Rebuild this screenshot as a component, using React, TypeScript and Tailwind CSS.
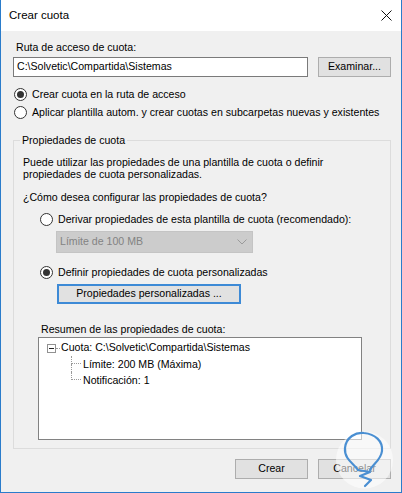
import React from 'react';

const font = { fontFamily: '"Liberation Sans", Arial, sans-serif' };

function Radio({ checked, label }: { checked?: boolean; label: string }) {
  return (
    <div className="flex items-center gap-[5px] h-[16px]">
      <div className="w-[13px] h-[13px] rounded-full border border-[#333] bg-white flex items-center justify-center shrink-0">
        {checked && <div className="w-[7px] h-[7px] rounded-full bg-[#333]" />}
      </div>
      <span className="whitespace-nowrap leading-[16px]">{label}</span>
    </div>
  );
}

function WinButton({ children, className = '' }: { children: React.ReactNode; className?: string }) {
  return (
    <div
      className={`h-[20px] bg-[#e1e1e1] border border-[#adadad] flex items-center justify-center whitespace-nowrap ${className}`}
    >
      {children}
    </div>
  );
}

function TreeChild({ text, last }: { text: string; last?: boolean }) {
  return (
    <div className="flex h-[16px]">
      <div className="w-[32px] shrink-0" />
      <div className="flex flex-col w-[10px] shrink-0">
        <div className="h-[8px] border-l border-b border-dotted border-[#9a9a9a]" />
        <div className={`h-[8px] ${last ? '' : 'border-l border-dotted border-[#9a9a9a]'}`} />
      </div>
      <span className="ml-[2px] leading-[16px] whitespace-nowrap">{text}</span>
    </div>
  );
}

export default function App() {
  return (
    <div
      className="relative w-[402px] h-[493px] border-l border-r border-b border-[#2a7ccb] bg-[#f0f0f0] text-black text-[10.6px] flex flex-col overflow-hidden"
      style={font}
    >
      {/* Title bar */}
      <div className="h-[31px] bg-white flex items-center justify-between pl-[8px] pr-[9px] shrink-0">
        <span className="text-[11.5px]">Crear cuota</span>
        <svg width="11" height="11" viewBox="0 0 11 11">
          <path d="M0.5 0.5 L10.5 10.5 M10.5 0.5 L0.5 10.5" stroke="#111" strokeWidth="1" fill="none" />
        </svg>
      </div>

      {/* Body */}
      <div className="flex flex-col pl-[12px] pr-[10px] pt-[9px]">
        <div className="pl-[3px] leading-[14px]">Ruta de acceso de cuota:</div>

        <div className="flex mt-[3px] gap-[10px]">
          <div className="w-[295px] h-[20px] bg-white border border-[#7a7a7a] flex items-center pl-[3px]">
            C:\Solvetic\Compartida\Sistemas
          </div>
          <WinButton className="w-[73px]">Examinar...</WinButton>
        </div>

        <div className="mt-[9px] ml-[1px]">
          <Radio checked label="Crear cuota en la ruta de acceso" />
        </div>
        <div className="mt-[2px] ml-[1px]">
          <Radio label="Aplicar plantilla autom. y crear cuotas en subcarpetas nuevas y existentes" />
        </div>

        {/* Group box */}
        <div className="relative mt-[20px] h-[309px] border border-[#dcdcdc] pl-[9px] pt-[15px] flex flex-col">
          <span className="absolute -top-[8px] left-[6px] px-[2px] bg-[#f0f0f0] leading-[14px]">
            Propiedades de cuota
          </span>
          <p className="leading-[12px]">
            Puede utilizar las propiedades de una plantilla de cuota o definir
            <br />
            propiedades de cuota personalizadas.
          </p>
          <div className="mt-[10px] leading-[14px]">¿Cómo desea configurar las propiedades de cuota?</div>

          <div className="mt-[7px] ml-[17px]">
            <Radio label="Derivar propiedades de esta plantilla de cuota (recomendado):" />
          </div>
          <div className="mt-[4px] ml-[33px] w-[197px] h-[22px] bg-[#cccccc] border border-[#c4c4c4] flex items-center justify-between pl-[3px] pr-[5px] text-[#838383]">
            <span>Límite de 100 MB</span>
            <svg width="10" height="6" viewBox="0 0 10 6">
              <path d="M0.5 0.5 L5 5 L9.5 0.5" stroke="#9a9a9a" strokeWidth="1" fill="none" />
            </svg>
          </div>

          <div className="mt-[11px] ml-[17px]">
            <Radio checked label="Definir propiedades de cuota personalizadas" />
          </div>
          <div className="mt-[4px] ml-[34px] w-[184px] h-[20px] bg-[#e1e1e1] border-2 border-[#3d8ad6] flex items-center justify-center">
            Propiedades personalizadas ...
          </div>

          <div className="mt-[18px] ml-[18px] leading-[14px]">Resumen de las propiedades de cuota:</div>
          <div className="mt-[1px] ml-[15px] w-[324px] h-[103px] bg-white border border-[#828282] pt-[2px] flex flex-col">
            <div className="flex items-center h-[16px]">
              <div className="ml-[8px] w-[9px] h-[9px] border border-[#919191] flex items-center justify-center shrink-0">
                <div className="w-[5px] h-px bg-[#222]" />
              </div>
              <div className="w-[4px] border-t border-dotted border-[#9a9a9a]" />
              <span className="ml-[1px] whitespace-nowrap">Cuota: C:\Solvetic\Compartida\Sistemas</span>
            </div>
            <TreeChild text="Límite: 200 MB (Máxima)" />
            <TreeChild text="Notificación: 1" last />
          </div>
        </div>

        {/* Bottom buttons */}
        <div className="flex justify-end gap-[10px] mt-[10px]">
          <WinButton className="w-[73px]">Crear</WinButton>
          <WinButton className="w-[73px]">Cancelar</WinButton>
        </div>
      </div>

      {/* Watermark logo */}
      <svg className="absolute left-[333px] top-[430px]" width="62" height="62" viewBox="0 0 62 62">
        <circle cx="30.5" cy="30" r="28.5" fill="#ffffff" fillOpacity="0.55" />
        <path
          d="M24 40 C20 34 10 29 11 18 C12 7 22 2 30 3 C41 4 49 11 48 21 C47 30 39 34 36 40"
          stroke="#4a8fd2"
          strokeWidth="2.2"
          fill="none"
          strokeLinecap="round"
        />
        <path
          d="M24 40 L36 42 L26 46 L37 50 L31 56"
          stroke="#4a8fd2"
          strokeWidth="2.2"
          fill="none"
          strokeLinecap="round"
          strokeLinejoin="round"
        />
      </svg>
    </div>
  );
}
